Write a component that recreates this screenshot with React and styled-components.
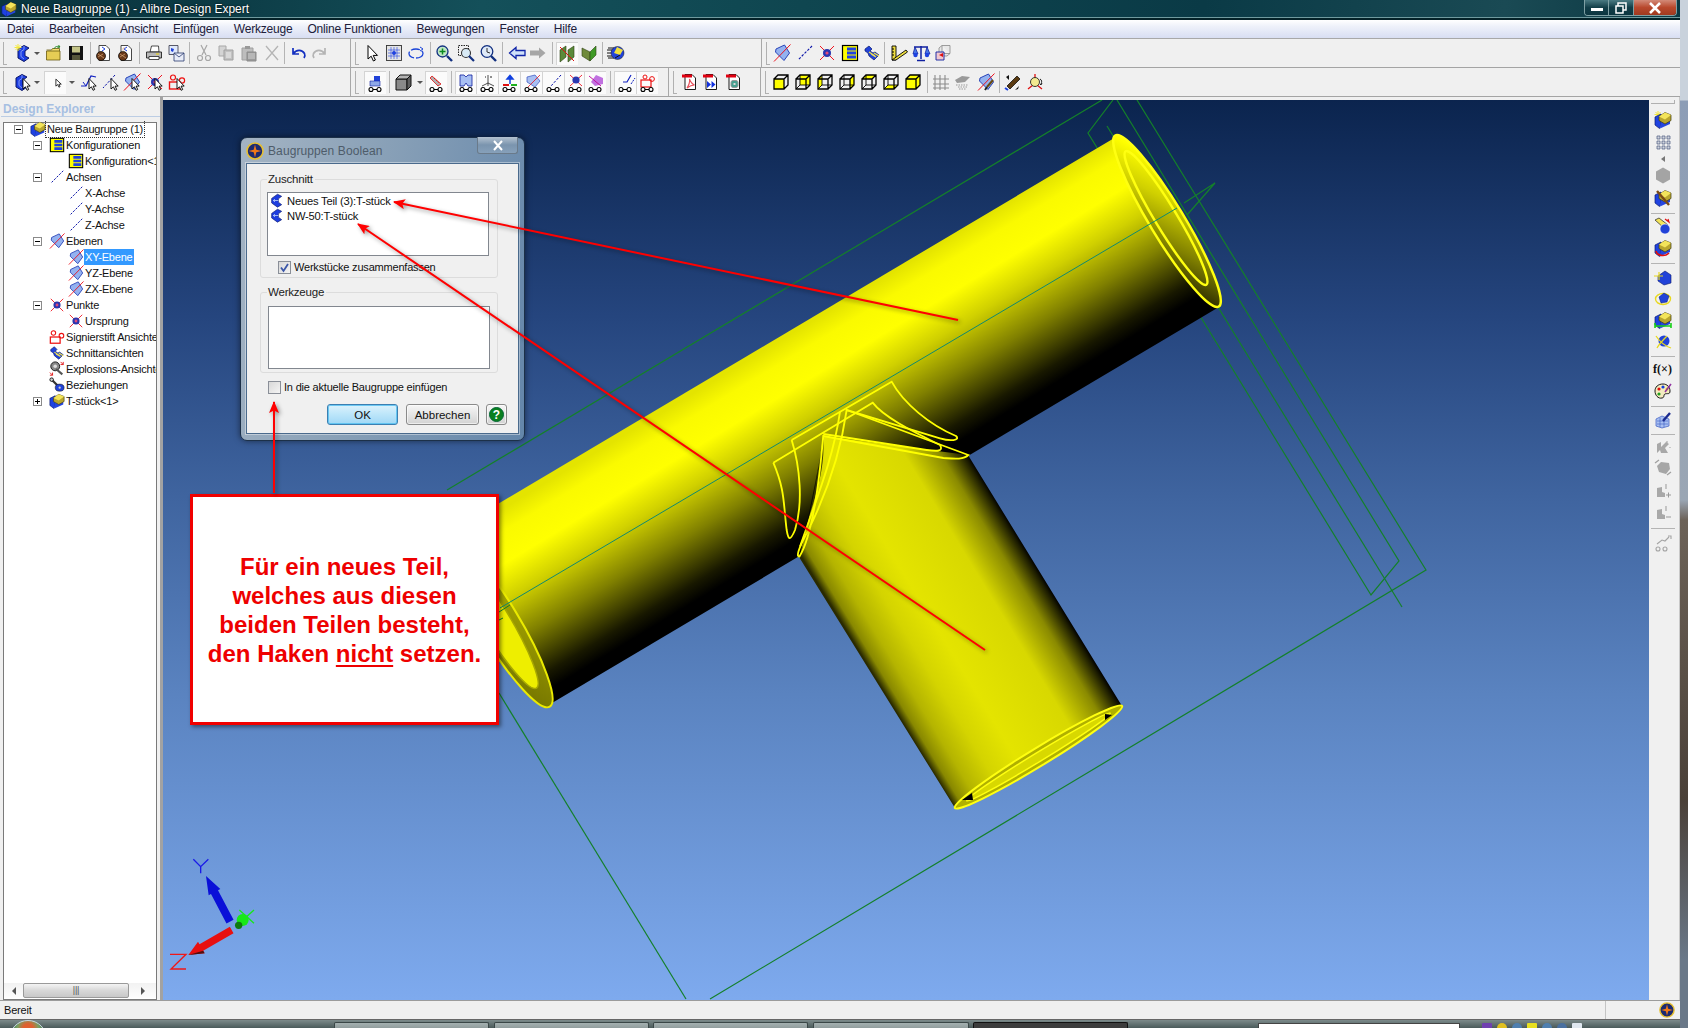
import React from 'react';
import styled, { createGlobalStyle } from 'styled-components';

const Global = createGlobalStyle`
  html, body { margin: 0; padding: 0; background: #fff; }
  #root { width: 1688px; height: 1028px; }
  * { box-sizing: border-box; }
`;

const SANS = `"Liberation Sans", Arial, sans-serif`;

/* ---------- icons ---------- */
const Ptr = () => <path d="M9 5.500v10.500l2.400-2.200 1.700 3.500 1.600-.8-1.600-3.400h3.100z" fill="#fff" stroke="#000" strokeWidth=".9" />;
const BlueC = ({ dx = 0 }) => (
  <g transform={`translate(${dx} 0)`}>
    <path d="M3 5 9 1.500 14 4l-4 3v5l4 2-5 3.500L3 14z" fill="#1c3ee4" stroke="#0a1668" strokeWidth="1" />
    <path d="M9 2v3.500L6 7.500v5l3 2.500" fill="none" stroke="#8ea4f5" strokeWidth=".9" />
  </g>
);
const Spark = () => <path d="M4 0v7M.5 3.500h7M1.500 1 6.500 6M6.500 1l-5 5" stroke="#f4e838" strokeWidth="1" />;
const PlaneS = () => (
  <>
    <path d="M3 5 11.500 1 16.500 9 11 16.500 2.500 8z" fill="#94b2f0" stroke="#2a44b8" strokeWidth="1" />
    <path d="M17.500 .5 1 17.500" stroke="#ee0f1a" strokeWidth="1" />
  </>
);
const AxisS = () => <path d="M16 2 2 16" stroke="#0a14a8" strokeWidth="1.100" strokeDasharray="2.500 1.500" />;
const PointS = () => (
  <>
    <path d="M2 2 16 16M16 2 2 16" stroke="#ee1522" strokeWidth="1" />
    <circle cx="9" cy="9" r="4" fill="#2a36b0" />
    <circle cx="9" cy="9" r="1.600" fill="#e04a7a" />
  </>
);
const TableS = () => (
  <>
    <rect x="1.500" y="1.500" width="15" height="15" fill="#ffff00" stroke="#000" strokeWidth="1.200" />
    <path d="M6 3.500h9v3H6zM6 7.500h9v3H6zM6 11.500h9v3H6z" fill="#1f42e0" />
  </>
);
const MarkerS = () => (
  <>
    <rect x="1.500" y="9" width="11" height="7" fill="none" stroke="#ee1010" strokeWidth="1.400" />
    <circle cx="5" cy="4.500" r="2.500" fill="none" stroke="#ee1010" strokeWidth="1.200" />
    <circle cx="14" cy="7.500" r="2.600" fill="none" stroke="#ee1010" strokeWidth="1.200" />
  </>
);
const SectionS = () => (
  <>
    <path d="M2 5 6 2l3 3-2 2 3 2 2-1 4 3-5 5-5-4-1-3-3-2z" fill="#2142d8" stroke="#0a1a70" strokeWidth=".7" />
    <path d="M8 10l5 3M6 8l6 4M11 9l5 3" stroke="#f5e54a" strokeWidth="1.300" />
  </>
);
const AssyS = () => (
  <>
    <path d="M1 6 7 3v11l-1.500 3.500L1 14z" fill="#1f42e0" stroke="#0a1a70" strokeWidth=".7" />
    <path d="M6 17.500 16 13V8L7 11z" fill="#2445e2" />
    <path d="M5 5.500 11 1.500l6 2.500v5.500l-6 3.500-6-3.500z" fill="#b9a62e" stroke="#3d3a10" strokeWidth=".7" />
    <path d="M5 5.500 11 8.500l6-4.500-6-2.500z" fill="#f3e45a" />
  </>
);
const Cart = ({ children }) => (
  <>
    {children}
    <circle cx="4" cy="15.500" r="2" fill="#fff" stroke="#000" strokeWidth="1.100" />
    <circle cx="12" cy="15.500" r="2" fill="#fff" stroke="#000" strokeWidth="1.100" />
    <path d="M6 15.500h4" stroke="#000" />
  </>
);
const Doc = ({ fill = '#fff', stroke = '#333' }) => <path d="M4 1.500h7l3.500 3.500v11.500H4z" fill={fill} stroke={stroke} strokeWidth=".9" />;
const Pdf = ({ children }) => (
  <>
    <Doc stroke="#000" />
    <rect x="1" y="1.500" width="10" height="3" fill="#e00010" />
    {children}
  </>
);
const Cube = ({ face }) => {
  const f = {
    front: 'M2 6h10v10H2z',
    back: 'M6 2h10v10H6z',
    left: 'M2 6 6 2v10l-4 4z',
    right: 'M12 6l4-4v10l-4 4z',
    top: 'M2 6 6 2h10l-4 4z',
    bottom: 'M2 16l4-4h10l-4 4z',
    solid: 'M2 6 6 2h10v10l-4 4H2z',
  }[face];
  return (
    <>
      <path d={f} fill="#ffff00" />
      <path d="M2 6h10v10H2zM2 6 6 2h10v10l-4 4M12 6l4-4" fill="none" stroke="#000" strokeWidth="1.300" />
      {face !== 'front' && face !== 'solid' && <path d="M6 2v10h10M6 12l-4 4" fill="none" stroke="#000" strokeWidth=".9" />}
    </>
  );
};
const Logo = () => (
  <>
    <circle cx="9" cy="9" r="8" fill="#1c2a70" stroke="#e8c030" strokeWidth="1.600" />
    <path d="M9 2.500 10.300 7.700 15.500 9 10.300 10.300 9 15.500 7.700 10.300 2.500 9 7.700 7.700z" fill="#f07818" />
  </>
);

const ICONS = {
  newPart: <><BlueC dx={1} /><Spark /></>,
  open: <><path d="M1.500 6h5l1-1.500h7V8" fill="#f6e070" stroke="#6a5a10" strokeWidth=".8" /><path d="M1.500 16V7h13.500v9z" fill="#e6cd55" stroke="#6a5a10" strokeWidth=".8" /><path d="M9 5c1-3 4-3 6-2l-1.500-2M15 3l-2.500.5" fill="none" stroke="#2b8a2b" /></>,
  save: <><path d="M2 2h14v14H2z" fill="#111" /><rect x="5" y="2.500" width="8" height="6" fill="#c4c488" /><rect x="5" y="11" width="8" height="5" fill="#56563a" /></>,
  docLockA: <><Doc /><path d="M7 3l3 2-3 2" fill="none" stroke="#1f42e0" /><circle cx="6" cy="12" r="4.500" fill="#6a3a1a" stroke="#000" strokeWidth=".7" /><path d="M3 10l6 4M3 13l5-3" stroke="#d9a878" strokeWidth=".7" /></>,
  docLockB: <><Doc /><path d="M10 3 7 5l3 2" fill="none" stroke="#1f42e0" /><circle cx="6" cy="12" r="4.500" fill="#6a3a1a" stroke="#000" strokeWidth=".7" /><path d="M3 10l6 4M3 13l5-3M6 7.500V4h2" stroke="#d9a878" strokeWidth=".7" fill="none" /></>,
  print: <><path d="M5 8 6.500 2h7L14 8z" fill="#fff" stroke="#222" strokeWidth=".8" /><path d="M1.500 8h15v6h-15z" fill="#b8b8b8" stroke="#222" strokeWidth=".9" /><path d="M4 12.500h10v3H4z" fill="#fff" stroke="#222" strokeWidth=".8" /><path d="M11 10h3" stroke="#e8d020" strokeWidth="1.200" /></>,
  preview: <><path d="M2 1.500h9v9H2z" fill="#dfe8fa" stroke="#334" strokeWidth=".8" /><path d="M4 4l3 1-1 3-2-1z" fill="#2142d8" /><path d="M7 9h10v8H7z" fill="#e9edf8" stroke="#2a3a70" strokeWidth=".8" /><path d="m7 9 5 4 5-4" fill="none" stroke="#2a3a70" strokeWidth=".8" /></>,
  cut: <g stroke="#a6a6a6" fill="none" strokeWidth="1.200"><path d="M6 1l5 10M12 1 7 11" /><circle cx="5" cy="14" r="2.500" /><circle cx="13" cy="14" r="2.500" /></g>,
  copy: <><path d="M2 2h7v10H2z" fill="#d4d4d4" stroke="#a8a8a8" /><path d="M7 6h9v10H7z" fill="#c2c2c2" stroke="#a0a0a0" /><path d="M9 9h5M9 11h5M9 13h5" stroke="#f0f0f0" /></>,
  paste: <><path d="M2 4h11v12H2z" fill="#bdbdbd" stroke="#a0a0a0" /><path d="M5 2h5v3H5z" fill="#999" /><path d="M7 8h9v9H7z" fill="#9a9a9a" stroke="#8a8a8a" /><path d="M8 10h7M8 12h7M8 14h7" stroke="#d4d4d4" /></>,
  del: <path d="M3 2l12 14M15 2 3 16" stroke="#b4b4b4" strokeWidth="1.300" />,
  undo: <path d="M4 4v6h6M4.500 9.500C7 5.500 13 5 15.500 9.500c.7 1.500.5 3-.5 4.500" fill="none" stroke="#1430c0" strokeWidth="1.700" />,
  redo: <path d="M14 4v6H8M13.500 9.500C11 5.500 5 5 2.500 9.500c-.7 1.500-.5 3 .5 4.500" fill="none" stroke="#b4b4b4" strokeWidth="1.700" />,
  pointer: <path d="M4 1.500v13.500l3.200-2.800 2.200 4.800 2-1-2.200-4.600h4.300z" fill="#fff" stroke="#000" strokeWidth="1" />,
  gridSel: <><rect x="1.500" y="1.500" width="15" height="15" fill="#e4e4e4" stroke="#333" strokeWidth=".9" /><path d="M9 3v12M3 9h12M6 3v12M12 3v12M3 6h12M3 12h12" stroke="#1f42e0" strokeWidth=".6" /><circle cx="9" cy="9" r="2" fill="#1f42e0" /></>,
  lasso: <><ellipse cx="9" cy="9.500" rx="7" ry="4.500" fill="none" stroke="#1a44d8" strokeWidth="1.300" strokeDasharray="9 2" /><path d="M13 3l3 2-3 2" fill="none" stroke="#1a44d8" /></>,
  zoomPlus: <><circle cx="7.500" cy="7.500" r="5.500" fill="#bfe6c6" stroke="#123080" strokeWidth="1.300" /><path d="M12 12l5 5" stroke="#123080" strokeWidth="2.400" /><path d="M7.500 4.500v6M4.500 7.500h6" stroke="#0a8a20" strokeWidth="1.500" /></>,
  zoomWin: <><path d="M1.500 1.500h10v10h-10z" fill="none" stroke="#222" strokeDasharray="1.500 1" /><circle cx="9" cy="9" r="4.500" fill="#d8eaf5" stroke="#333" strokeWidth="1.100" /><path d="M12 12l5 5" stroke="#123080" strokeWidth="2.200" /></>,
  zoomHist: <><circle cx="8" cy="7.500" r="5.800" fill="#dfeaf8" stroke="#123080" strokeWidth="1.300" /><path d="M12 12l5 5" stroke="#123080" strokeWidth="2.400" /><path d="M8 4v4l3 1" fill="none" stroke="#333" /></>,
  back: <path d="M1.500 9 8 3.500v3h9v5H8v3z" fill="#cfe0fa" stroke="#1024a8" strokeWidth="1.300" />,
  forward: <path d="M16.500 9 10 3.500v3H1v5h9v3z" fill="#a6a6a6" />,
  greenPlanes: <><path d="M2 5 8 1v11l-6 5z" fill="#5a8a3a" stroke="#2b4010" strokeWidth=".6" /><path d="M10 5l6-4v11l-6 5z" fill="#5a8a3a" stroke="#2b4010" strokeWidth=".6" /><path d="M2 2 16 16" stroke="#e01010" strokeWidth="1" /></>,
  greenPlane: <><path d="M2 4l8 4v9L2 12z" fill="#6f8a3a" stroke="#2b4010" strokeWidth=".6" /><path d="M10 8l6-6v9l-6 6z" fill="#3f9a26" stroke="#2b4010" strokeWidth=".6" /></>,
  speedBall: <><path d="M0 6h6M0 9h6M0 12h6M1 4h6M1 14h6" stroke="#111" /><circle cx="10.500" cy="9" r="6.500" fill="#2142d8" stroke="#111" strokeWidth=".5" /><path d="M10 3l6 3-3 5-6-2z" fill="#f0e040" /><path d="M8 14l5-3" stroke="#111" /></>,
  plane: <PlaneS />,
  axis: <AxisS />,
  point: <PointS />,
  table: <TableS />,
  section: <SectionS />,
  ruler: <><path d="M2 2h4v14H2z" fill="#f0e040" stroke="#000" strokeWidth=".9" /><path d="M2 16 16 6l1.500 2L6 16z" fill="#f0e040" stroke="#000" strokeWidth=".9" /><path d="M2 5h2M2 8h2M2 11h2" stroke="#000" /></>,
  balance: <><path d="M9 2v13M5 16.500h8M2 3h14" stroke="#1020a0" strokeWidth="1.500" /><path d="M3 3 1 10h5zM15 3l-2 7h5z" fill="#4a7ae8" stroke="#1020a0" strokeWidth=".8" /><circle cx="3.500" cy="11" r="2.200" fill="#1f42e0" /><circle cx="15" cy="11" r="2.200" fill="#1f42e0" /></>,
  ghostCubes: <><path d="M8 1.500h8v8H8zM8 1.500 5 4v8h8l3-2.500" fill="#e8e8e8" stroke="#888" strokeWidth=".8" /><path d="M2 8h8v8H2z" fill="#f0c8d0" stroke="#1020a0" strokeWidth=".9" /><path d="M5 11l4-2v4z" fill="#e01010" /></>,
  newPartP: <><BlueC dx={-1} /><Ptr /></>,
  sketchP: <><path d="M1 13h5L11 3l5 1" fill="none" stroke="#1020c0" strokeWidth="1.200" /><path d="M3 9l3 4" stroke="#1020c0" /><Ptr /></>,
  axisP: <><path d="M13 2 1 15" stroke="#0a14a8" strokeDasharray="2.500 1.500" /><Ptr /></>,
  planeP: <><PlaneS /><Ptr /></>,
  pointP: <><PointS /><Ptr /></>,
  markerP: <><MarkerS /><Ptr /></>,
  cartAssy: <Cart><path d="M7 2h6v5H7z" fill="#2142d8" /><path d="M3 7h10v5H3z" fill="#8ea8e8" stroke="#1020a0" strokeWidth=".6" /></Cart>,
  cube: <><path d="M2 6h11v11H2z" fill="#8a8a8a" stroke="#111" strokeWidth="1" /><path d="M2 6l4-4h11l-4 4z" fill="#b4b4b4" stroke="#111" strokeWidth="1" /><path d="M13 6l4-4v11l-4 4z" fill="#5e5e5e" stroke="#111" strokeWidth="1" /></>,
  cartRed: <Cart><path d="M4 2 13 10l-3 2-8-8z" fill="#b0b0b0" stroke="#e01010" strokeWidth=".8" /><path d="M6 4l5 5" stroke="#e01010" strokeDasharray="1.500 1" /></Cart>,
  cartPlaneBlue: <Cart><path d="M2 1h4l2 2 2-2h4v11H10L8 9l-2 3H2z" fill="#a8bff2" stroke="#1020a0" strokeWidth=".8" /></Cart>,
  cartAxes: <Cart><path d="M9 12V1M3 12l6-3 6 3" fill="none" stroke="#222" strokeWidth=".8" /><path d="M6 3h1M11 3h2" stroke="#222" /></Cart>,
  cartArrows: <Cart><path d="M9 10V2M6 5l3-3.500L12 5z" fill="#1040e0" stroke="#1040e0" strokeWidth="1.500" /><path d="M2 11h6" stroke="#e01010" strokeWidth="2" /><path d="M10 11h6" stroke="#20b020" strokeWidth="2" /></Cart>,
  cartPlaneRed: <Cart><path d="M4 3 12 1l5 6-5 6-8-5z" fill="#a8bff2" stroke="#3550c0" strokeWidth=".7" /><path d="M17 1 5 13" stroke="#e8101c" strokeWidth=".8" /></Cart>,
  cartAxis: <Cart><path d="M16 1 6 12" stroke="#0a14a8" strokeDasharray="2.500 1.500" /></Cart>,
  cartPoint: <Cart><path d="M3 1 15 12M15 1 3 12" stroke="#ee1522" strokeWidth=".9" /><circle cx="9" cy="6" r="3.600" fill="#2a36b0" /></Cart>,
  cartPurple: <Cart><path d="M9 1l7 3v6l-8 2-4-4z" fill="#c070e0" /><path d="M2 2l12 10" stroke="#c010a0" /></Cart>,
  cartSketch: <Cart><path d="M6 8h4l4-7" fill="none" stroke="#1020c0" strokeWidth="1.200" /><path d="M14 10 18 4" stroke="#1020c0" strokeDasharray="2 1" /></Cart>,
  cartMarker: <Cart><rect x="2" y="6" width="10" height="7" fill="none" stroke="#ee1010" strokeWidth="1.200" /><circle cx="6" cy="3" r="2" fill="none" stroke="#ee1010" /><circle cx="13" cy="5" r="2.400" fill="none" stroke="#ee1010" /></Cart>,
  pdfA: <Pdf><path d="M6 15c2-3 3-6 2.500-9 1 3 2.500 5 5 6-3 0-5 1-7.500 3z" fill="none" stroke="#e8505a" strokeWidth="1.100" /></Pdf>,
  pdfB: <Pdf><path d="M5 8l4 3.500L5 15zM9.500 8l4 3.500-4 3.500z" fill="#1030e0" /></Pdf>,
  pdfC: <Pdf><rect x="6" y="7.500" width="7" height="7" rx="2" fill="#48a090" stroke="#999" /><rect x="8.500" y="10" width="2" height="2" fill="#d8d8d8" /></Pdf>,
  cFront: <Cube face="front" />, cBack: <Cube face="back" />, cLeft: <Cube face="left" />, cRight: <Cube face="right" />, cTop: <Cube face="top" />, cBottom: <Cube face="bottom" />, cSolid: <Cube face="solid" />,
  grayGrid: <path d="M3 2v15M8 2v15M13 2v15M1 6h16M1 11h16M1 15h16" stroke="#8c8c8c" strokeWidth="1.100" fill="none" />,
  grayScatter: <><path d="M2 7l7-4 8 1-5 5-8 1z" fill="#9a9a9a" /><path d="M3 12h12M5 14h9M6 16h7" stroke="#9a9a9a" strokeDasharray="1.500 1" /></>,
  planeBrush: <><PlaneS /><path d="M16 7 10 14" stroke="#6a4a10" strokeWidth="2" /><path d="M10 14l-2 3" stroke="#222" strokeWidth="2" /></>,
  spy: <><path d="M4 13 14 3l3 3-10 10z" fill="#5a3a10" stroke="#000" strokeWidth=".7" /><path d="M3 4l3-2v5zM15 16l-3 1 4-4z" fill="#111" /><path d="M2 15l3 2" stroke="#1f42e0" strokeWidth="2" /></>,
  target: <><path d="M9 1v4M2 16l5-4M16 16l-5-4" stroke="#e01010" strokeWidth="1.300" /><circle cx="9" cy="9" r="4.500" fill="#f3ea90" stroke="#222" strokeWidth=".9" /><path d="M14 6c2 1 2 3 1 5M14 11l1 1 1-2" fill="none" stroke="#222" /></>,
  dots: <path d="M3 3h3v3H3zM8 3h3v3H8zM13 3h3v3h-3zM3 8h3v3H3zM8 8h3v3H8zM13 8h3v3h-3zM3 13h3v3H3zM8 13h3v3H8zM13 13h3v3h-3z" fill="#cfd4de" stroke="#4a5a80" strokeWidth=".7" />,
  tiny: <path d="M11 6v6L7 9z" fill="#777" />,
  hex: <path d="M9 1.500l7 4v8l-7 4-7-4v-8z" fill="#a4a4a4" />,
  pickBlue: <><AssyS /><path d="M3 2l12 14" stroke="#7a4a14" strokeWidth="2.400" /></>,
  keyBall: <><path d="M1 3l4-2 9 7-4 3z" fill="#f3e45a" stroke="#222" strokeWidth=".7" /><circle cx="11" cy="12" r="5" fill="#2142d8" stroke="#fff" strokeWidth=".6" /><path d="M11 2l4 3-1-3" fill="none" stroke="#e01010" strokeWidth="1.200" /></>,
  redArc: <><AssyS /><path d="M2 12c1 5 9 6 13 2" fill="none" stroke="#e01010" strokeWidth="1.600" /></>,
  blueSpark: <><path d="M4 8 11 3l6 4v8l-7 2-6-4z" fill="#2142d8" stroke="#0a1a70" strokeWidth=".6" /><path d="M0 8h9M5 4v8" stroke="#e8d820" strokeWidth="1.200" /></>,
  blueRing: <><ellipse cx="9" cy="9" rx="7.500" ry="5.500" fill="none" stroke="#e8d820" strokeWidth="1.400" /><path d="M5 7l5-4 5 3-2 6-6 1z" fill="#2142d8" stroke="#0a1a70" strokeWidth=".5" /></>,
  greenLink: <><AssyS /><path d="M1 15h16M1 12v5M17 12v5" stroke="#18d018" strokeWidth="1.600" /></>,
  ringBall: <><circle cx="10" cy="8" r="5.500" fill="#2142d8" /><path d="M2 3c4 6 9 10 15 12M13 3C9 7 5 11 3 15" fill="none" stroke="#e8d820" strokeWidth="1.300" /></>,
  palette: <><path d="M9 2c-5 0-8 3-8 7s3 8 7 7c3-.5 1-3 3-4s5 1 5-3c0-4-3-7-7-7z" fill="#f4ecc0" stroke="#000" strokeWidth=".9" /><circle cx="5" cy="7" r="1.600" fill="#e01010" /><circle cx="9" cy="5" r="1.600" fill="#1040e0" /><circle cx="5" cy="12" r="1.600" fill="#20a020" /><circle cx="13" cy="7" r="1.500" fill="#e8d020" /><path d="M11 10 17 2" stroke="#9030a0" strokeWidth="1.500" /></>,
  brushCube: <><path d="M2 8l6-3 7 3v7l-7 2-6-2z" fill="#a8bff2" stroke="#3a5ac0" strokeWidth=".7" /><path d="M3 10h11M3 13h11M6 7v9M10 7v9" stroke="#3a5ac0" strokeWidth=".6" /><path d="M9 10 16 2" stroke="#1a2a90" strokeWidth="2.400" /></>,
  gMinus: <><path d="M3 14V5l4-2v5l5-5 3 2-4 4 3 5H7l-1-3z" fill="#a8a8a8" /><path d="M13 2v2M16 8v1" stroke="#a0a0a0" /></>,
  gSpin: <><path d="M3 7l4-4 8 1 1 6-4 5-7-2z" fill="#a6a6a6" /><path d="M1 4 5 1M13 16l4-3" stroke="#a0a0a0" strokeWidth="1.300" /></>,
  gPlus: <><path d="M3 15V6l5-1v5l3 1v4z" fill="#a8a8a8" /><path d="M12 13h5M14.500 10.500v5M12 2v5" stroke="#999" /></>,
  gDash: <><path d="M3 15V6l5-1v5l3 1v4z" fill="#a8a8a8" /><path d="M12 13h5M12 2v5" stroke="#999" /></>,
  gCart: <g fill="none" stroke="#a4a4a4" strokeWidth="1.100"><circle cx="4" cy="15" r="2" /><circle cx="11" cy="15" r="2" /><path d="M3 10l5-4 3 1 4-4M14 2h3v3" /></g>,
  /* tree */
  assy: <AssyS />,
  explode: <><circle cx="7" cy="6" r="5" fill="#888" stroke="#111" strokeWidth="1" /><circle cx="7" cy="6" r="2" fill="#ddd" /><path d="M8 9l7 6" stroke="#555" strokeWidth="2.400" /><path d="M13 1l3 3M16 1v3h-3M1 13l3 3M1 16h3v-3" fill="none" stroke="#e01010" /></>,
  relate: <><path d="M2 2l9 9" stroke="#333" strokeWidth="2.400" /><circle cx="3" cy="3" r="2" fill="#ccc" stroke="#111" /><ellipse cx="12" cy="12" rx="5" ry="4" fill="#2142d8" stroke="#111" strokeWidth=".6" /><circle cx="12" cy="12" r="1.300" fill="#ccc" /></>,
  marker: <MarkerS />,
  partBlue: <><path d="M2 6.500 9 1.500l5 2.500-4 3v4l4 3-5 3-7-5z" fill="#1e3ee0" stroke="#0a1a70" strokeWidth=".8" /><path d="M4 9h6M4 9l2-1.500M4 9l2 1.500" stroke="#bcd0fa" /></>,
  logo: <Logo />,
  newPartAssy: <><Spark /><AssyS /></>,
};

const IconSvg = styled.svg`
  display: block;
  flex: none;
  overflow: visible;
`;
const Icon = ({ name, size = 18 }) => (
  <IconSvg viewBox="0 0 18 18" width={size} height={size}>{ICONS[name]}</IconSvg>
);

/* ---------- frame ---------- */
const Screen = styled.div`
  position: relative;
  width: 1688px;
  height: 1028px;
  overflow: hidden;
  display: flex;
  font-family: ${SANS};
  font-size: 11px;
  letter-spacing: -0.2px;
  color: #111;
`;
const AppWindow = styled.div`
  width: 1680px;
  height: 1020px;
  display: flex;
  flex-direction: column;
  background: #f0f0f0;
`;
const Column = styled.div`
  width: 1680px;
  display: flex;
  flex-direction: column;
  height: 1028px;
`;
const DesktopStrip = styled.div`
  width: 8px;
  background: linear-gradient(180deg, #c9d2dc 0, #c9d2dc 100px, #8c9db6 101px, #9aa6b4 500px, #6c6258 520px, #4a4038 800px, #6a7888 960px, #6a7888 100%);
`;
const TitleBar = styled.div`
  height: 20px;
  flex: none;
  display: flex;
  align-items: center;
  padding-left: 1px;
  gap: 4px;
  color: #fff;
  font-size: 12px;
  letter-spacing: 0;
  background: linear-gradient(95deg, #0a3640 0, #0c3a44 200px, #14505a 480px, #0f4650 800px, #0a3a46 1200px, #1a4a54 1500px, #0b3842 100%);
  border-bottom: 2px solid #042228;
  box-shadow: inset 0 -1px 0 #6f9a9e;
  position: relative;
  text-shadow: 0 0 2px #000;
`;
const WinButtons = styled.div`
  position: absolute;
  top: 0;
  right: 3px;
  display: flex;
  height: 16px;
  border: 1px solid #7fa0a4;
  border-top: none;
  border-radius: 0 0 4px 4px;
  overflow: hidden;
`;
const WinBtn = styled.div`
  width: ${p => p.$w}px;
  display: flex;
  align-items: center;
  justify-content: center;
  background: ${p => p.$close ? 'linear-gradient(180deg,#d28a78,#b8482c 50%,#a03a20)' : 'linear-gradient(180deg,#4a7a82,#123e48 50%,#0c3640)'};
  border-right: ${p => p.$close ? 'none' : '1px solid #7fa0a4'};
`;
const MenuBar = styled.div`
  height: 19px;
  flex: none;
  display: flex;
  align-items: center;
  gap: 15px;
  padding-left: 7px;
  font-size: 12px;
  background: linear-gradient(180deg, #ffffff 0, #eef1fa 35%, #d8def2 100%);
  border-bottom: 1px solid #a8a8a8;
  color: #20203a;
`;
const ToolRow = styled.div`
  height: 29px;
  flex: none;
  display: flex;
  align-items: stretch;
  margin-left: -9px;
  background: #f0f0f0;
  border-bottom: 1px solid #a4a4a4;
`;
const ToolSlot = styled.div`
  width: ${p => p.$w}px;
  flex: none;
  display: flex;
  align-items: center;
`;
const ToolCell = styled.div`
  width: 18px;
  flex: none;
  align-self: stretch;
  display: flex;
  align-items: center;
  justify-content: center;
`;
const Sep = styled.div`
  width: 1px;
  height: 22px;
  flex: none;
  background: #b4b4b4;
`;
const ToolEnd = styled.div`
  width: 1px;
  flex: none;
  align-self: stretch;
  background: #a8a8a8;
`;
const Grip = styled.div`
  width: 4px;
  height: 23px;
  flex: none;
  border-left: 1px solid #b0b0b0;
  border-bottom: 1px solid #b0b0b0;
`;
const DropArrow = styled.div`
  width: 0;
  height: 0;
  flex: none;
  border-left: 3px solid transparent;
  border-right: 3px solid transparent;
  border-top: 3px solid #555;
`;
const Pressed = styled.div`
  flex: none;
  width: ${p => p.$w || 22}px;
  height: 23px;
  display: flex;
  align-items: center;
  justify-content: ${p => p.$end ? 'flex-end' : 'center'};
  background: #fbfbfb;
  border-left: 1px solid #d4d4d4;
  border-top: 1px solid #d4d4d4;
`;

const Toolbar = ({ items }) => (
  <ToolRow>
    <ToolSlot $w={items[0][1]} />
    {items.map(([name, x], i) => {
      const w = (items[i + 1] ? items[i + 1][1] : x + 18) - x;
      let inner;
      if (name === 'sep') inner = <Sep />;
      else if (name === 'end') inner = <ToolEnd />;
      else if (name === 'grip') inner = <Grip />;
      else if (name === 'dd') inner = <DropArrow />;
      else if (name === 'blank') inner = <Pressed $w={22} $end><IconSvg viewBox="0 0 18 18" width="14" height="14"><path d="M5 4v9l2.400-2 1.500 3.400 1.500-.7-1.500-3.200h3z" fill="#fff" stroke="#000" /></IconSvg></Pressed>;
      else if (name.endsWith('*')) inner = <Pressed><Icon name={name.slice(0, -1)} /></Pressed>;
      else inner = <Icon name={name} />;
      return <ToolSlot key={i} $w={w}><ToolCell>{inner}</ToolCell></ToolSlot>;
    })}
  </ToolRow>
);

const ROW1 = [
  ['grip', 5], ['newPart', 23], ['dd', 37], ['open', 53.6], ['save', 76.5], ['sep', 91], ['docLockA', 104], ['docLockB', 126], ['sep', 140], ['print', 154], ['preview', 176], ['sep', 190], ['cut', 204], ['copy', 226], ['paste', 249], ['del', 272], ['sep', 285], ['undo', 298.5], ['redo', 320], ['end', 351],
  ['grip', 357], ['pointer', 373], ['gridSel', 394], ['lasso', 416], ['sep', 430.5], ['zoomPlus', 444], ['zoomWin', 466], ['zoomHist', 488], ['sep', 502.5], ['back', 517], ['forward', 538], ['sep', 553], ['greenPlanes*', 567], ['greenPlane', 589], ['sep', 603], ['speedBall', 616], ['end', 762],
  ['grip', 768], ['plane', 782], ['axis', 805], ['point', 827], ['table', 850], ['section', 872], ['sep', 885], ['ruler', 899], ['balance', 921], ['ghostCubes', 943],
];
const ROW2 = [
  ['grip', 5], ['newPartP', 23], ['dd', 37], ['blank', 54.5], ['dd', 71.5], ['sketchP', 89], ['axisP', 111], ['planeP', 132], ['pointP', 155], ['markerP', 177], ['end', 350],
  ['grip', 357], ['cartAssy*', 375], ['sep', 389], ['cube', 403], ['dd', 420], ['cartRed*', 436], ['sep', 451.5], ['cartPlaneBlue*', 466], ['cartAxes*', 487], ['cartArrows*', 509], ['cartPlaneRed*', 531], ['cartAxis*', 553], ['cartPoint*', 575], ['cartPurple*', 595], ['sep', 610], ['cartSketch*', 625], ['cartMarker*', 647], ['end', 668],
  ['grip', 675], ['pdfA', 690], ['pdfB', 711], ['pdfC', 734], ['end', 760],
  ['grip', 767], ['cFront', 781], ['cBack', 803], ['cLeft', 825], ['cRight', 847], ['cTop', 869], ['cBottom', 891], ['cSolid', 913], ['sep', 927], ['grayGrid', 941], ['grayScatter', 962], ['planeBrush', 986], ['sep', 999], ['spy', 1012], ['target', 1035],
];

/* ---------- main ---------- */
const Main = styled.div`
  flex: 1;
  min-height: 0;
  display: flex;
  align-items: stretch;
  background: #f0f0f0;
`;
const LeftPanel = styled.div`
  width: 163px;
  flex: none;
  display: flex;
  flex-direction: column;
  padding-left: 3px;
  border-right: 3px solid #a2a2a2;
`;
const PanelHeader = styled.div`
  height: 20px;
  flex: none;
  margin-left: -2px;
  display: flex;
  align-items: center;
  font-size: 12px;
  font-weight: bold;
  letter-spacing: 0;
  color: #a6bfe2;
  border-bottom: 1px solid #bccde4;
  padding-left: 2px;
  padding-top: 4px;
`;
const TreeBox = styled.div`
  margin-top: 5px;
  width: 154px;
  flex: 1;
  min-height: 0;
  display: flex;
  flex-direction: column;
  background: #fff;
  border: 1px solid #7a7a7a;
`;
const TreeList = styled.div`
  flex: 1;
  min-height: 0;
  overflow: hidden;
  margin-top: -2px;
`;
const TreeRow = styled.div`
  height: 16px;
  display: flex;
  align-items: center;
  white-space: nowrap;
  padding-left: ${p => 9.5 + 19 * p.$level}px;
`;
const Expander = styled.div`
  width: 9px;
  height: 9px;
  flex: none;
  margin-right: 7.500px;
  border: 1px solid #8a8a8a;
  background: #fff;
  position: relative;
  visibility: ${p => p.$hidden ? 'hidden' : 'visible'};
  &::before {
    content: '';
    position: absolute;
    left: 1px;
    top: 3px;
    width: 5px;
    height: 1px;
    background: #000;
  }
  &::after {
    content: '';
    display: ${p => p.$plus ? 'block' : 'none'};
    position: absolute;
    left: 3px;
    top: 1px;
    width: 1px;
    height: 5px;
    background: #000;
  }
`;
const TreeLabel = styled.span`
  padding: 1px 1px;
  line-height: 14px;
  color: ${p => p.$selected ? '#fff' : '#111'};
  background: ${p => p.$selected ? '#3399ff' : 'transparent'};
  outline: ${p => p.$focus ? '1px dotted #333' : 'none'};
`;
const HScroll = styled.div`
  height: 15px;
  flex: none;
  display: flex;
  align-items: center;
  background: linear-gradient(180deg, #f2f2f2, #fdfdfd);
  margin-bottom: 1px;
`;
const ScrollArrow = styled.div`
  width: ${p => p.$left ? '19px' : 'auto'};
  flex: ${p => p.$left ? 'none' : '1'};
  display: flex;
  justify-content: center;
  &::before {
    content: '';
    border-top: 4px solid transparent;
    border-bottom: 4px solid transparent;
    border-right: ${p => p.$left ? '4px solid #555' : 'none'};
    border-left: ${p => p.$left ? 'none' : '4px solid #555'};
  }
`;
const ScrollThumb = styled.div`
  width: 106px;
  height: 15px;
  flex: none;
  border: 1px solid #9a9a9a;
  border-radius: 2px;
  background: linear-gradient(180deg, #f4f4f4, #d8d8d8 50%, #c8c8c8);
  display: flex;
  align-items: center;
  justify-content: center;
  font-size: 9px;
  color: #555;
  line-height: 1;
`;
const Viewport = styled.div`
  flex: 1;
  min-width: 0;
  margin-top: 3px;
  background: linear-gradient(180deg, #0b244e 0, #25457e 24%, #3f649f 44%, #5a83c0 66%, #7eaaee 100%);
`;
const ModelSvg = styled.svg`
  display: block;
  width: 1486px;
  height: 900px;
`;
const RightBar = styled.div`
  width: 31px;
  flex: none;
  display: flex;
  flex-direction: column;
  align-items: center;
  background: #f0f0f0;
  border-right: 1px solid #c8c8c8;
  padding: 3px 3px 0 0;
`;
const VGrip = styled.div`
  width: 24px;
  height: 4px;
  flex: none;
  border-bottom: 1px solid #b0b0b0;
  border-right: 1px solid #b0b0b0;
  margin-bottom: 2px;
`;
const VSlot = styled.div`
  height: ${p => p.$h}px;
  width: 100%;
  flex: none;
  display: flex;
  justify-content: center;
  font-family: "Liberation Serif", serif;
  font-weight: bold;
  font-size: 12px;
  letter-spacing: 0;
`;
const VCell = styled.div`
  height: 18px;
  flex: none;
  display: flex;
  align-items: center;
  justify-content: center;
`;
const VSep = styled.div`
  width: 24px;
  height: 1px;
  background: #b4b4b4;
`;
const StatusBar = styled.div`
  height: 20px;
  flex: none;
  display: flex;
  align-items: center;
  justify-content: space-between;
  border-top: 1px solid #9c9c9c;
  border-bottom: 1px solid #666;
  padding-left: 4px;
  background: #f0f0f0;
`;
const StatusCell = styled.div`
  width: 75px;
  height: 100%;
  display: flex;
  align-items: center;
  justify-content: flex-end;
  padding-right: 5px;
  border-left: 1px solid #c4c4c4;
`;
const TaskBar = styled.div`
  flex: 1;
  min-height: 0;
  display: flex;
  overflow: hidden;
  background: linear-gradient(180deg, #7c8a8a, #4a5a5a);
`;
const StartOrb = styled.div`
  width: 38px;
  height: 38px;
  flex: none;
  margin: 0 0 0 9px;
  border-radius: 50%;
  border: 1px solid #c8d8e0;
  background: radial-gradient(circle at 50% 22%, #e06030 0 15%, #78a060 32%, #2a5a6a 60%);
`;
const TaskBtn = styled.div`
  width: ${p => p.$w}px;
  margin-left: ${p => p.$ml}px;
  flex: none;
  height: 8px;
  margin-top: 2px;
  border: 1px solid ${p => p.$dark ? '#111' : '#3a4646'};
  border-bottom: none;
  border-radius: 2px 2px 0 0;
  background: ${p => p.$dark ? '#3c3c3c' : 'linear-gradient(180deg,#a4b0b0,#8a9696)'};
`;
const SearchBox = styled.div`
  width: 202px;
  margin-left: 130px;
  height: 8px;
  margin-top: 3px;
  flex: none;
  background: #fff;
  border: 1px solid #444;
  border-bottom: none;
`;
const Tray = styled.div`
  margin-left: 22px;
  flex: none;
  display: flex;
  gap: 5px;
  padding-top: 3px;
`;
const TrayDot = styled.div`
  width: 10px;
  height: 10px;
  border-radius: ${p => p.$round ? '50%' : '1px'};
  background: ${p => p.$c};
`;

/* ---------- overlays ---------- */
const Dialog = styled.div`
  position: absolute;
  left: 240px;
  top: 137px;
  width: 285px;
  height: 304px;
  padding: 0 5px 6px 5px;
  display: flex;
  flex-direction: column;
  border: 1px solid #1c3048;
  border-radius: 7px;
  background: linear-gradient(100deg, #a4b4c4 0, #8ba2b8 40%, #6486aa 100%);
  box-shadow: 0 0 6px rgba(0, 0, 0, .5);
`;
const DialogTitle = styled.div`
  height: 25px;
  flex: none;
  display: flex;
  align-items: center;
  gap: 4px;
  font-size: 12px;
  letter-spacing: .1px;
  color: #4e5c6a;
`;
const DialogClose = styled.div`
  position: absolute;
  top: -1px;
  right: 6px;
  width: 41px;
  height: 17px;
  display: flex;
  align-items: center;
  justify-content: center;
  border: 1px solid #6a7a8a;
  border-top: none;
  border-radius: 0 0 3px 3px;
  background: linear-gradient(180deg, #b4c2d0, #7a94ae 50%, #86a0ba);
`;
const DialogClient = styled.div`
  flex: 1;
  display: flex;
  flex-direction: column;
  padding: 8px 0 0 13px;
  background: #f0f0f0;
  border: 1px solid #4a6a8c;
  box-shadow: 0 0 0 1px rgba(255, 255, 255, .4);
`;
const Group = styled.fieldset`
  width: 238px;
  min-width: 0;
  margin: ${p => p.$mt}px 0 0 0;
  padding: ${p => p.$pt}px 8px ${p => p.$pb}px 6px;
  border: 1px solid #dcdcdc;
  border-radius: 3px;
  & > legend {
    font-size: 11.500px;
    line-height: 14px;
    margin-left: 0;
    padding: 0 2px 0 1px;
    color: #222;
  }
`;
const ListBox = styled.div`
  width: 222px;
  height: ${p => p.$h}px;
  margin-left: ${p => p.$ml || 0}px;
  padding: 0 2px;
  background: #fff;
  border: 1px solid #82878f;
`;
const ListItem = styled.div`
  height: 15px;
  display: flex;
  align-items: center;
  gap: 2px;
  white-space: nowrap;
  font-size: 11.200px;
  letter-spacing: -.2px;
`;
const CheckRow = styled.label`
  display: flex;
  align-items: center;
  gap: 3px;
  margin: ${p => p.$mt}px 0 0 ${p => p.$ml}px;
  white-space: nowrap;
  height: 14px;
`;
const CheckBox = styled.span`
  width: 13px;
  height: 13px;
  flex: none;
  display: flex;
  align-items: center;
  justify-content: center;
  border: 1px solid #8a8f98;
  background: linear-gradient(135deg, #d8d8d8, #f4f4f4);
`;
const ButtonRow = styled.div`
  display: flex;
  justify-content: flex-end;
  gap: 8px;
  margin-top: 10px;
  padding-right: 11px;
`;
const DlgButton = styled.div`
  width: ${p => p.$w}px;
  height: 21px;
  display: flex;
  align-items: center;
  justify-content: center;
  font-size: 11.500px;
  letter-spacing: 0;
  border-radius: 3px;
  border: 1px solid ${p => p.$primary ? '#3c7fb1' : '#8a8a8a'};
  background: ${p => p.$primary ? 'linear-gradient(180deg,#dcf2fc,#bde6fa 48%,#a0d8f6)' : 'linear-gradient(180deg,#f6f6f6,#e6e6e6 48%,#d2d2d2)'};
  box-shadow: inset 0 0 0 1px ${p => p.$primary ? 'rgba(80, 190, 240, .8)' : 'rgba(255, 255, 255, .6)'};
`;
const HelpButton = styled(DlgButton)`
  margin-left: -1px;
`;
const HelpDot = styled.span`
  width: 15px;
  height: 15px;
  border-radius: 50%;
  display: flex;
  align-items: center;
  justify-content: center;
  background: #0a8020;
  border: 1px solid #063;
  color: #fff;
  font-weight: bold;
  font-size: 12px;
`;
const Callout = styled.div`
  position: absolute;
  left: 190px;
  top: 494px;
  width: 309px;
  height: 231px;
  display: flex;
  align-items: center;
  justify-content: center;
  text-align: center;
  background: #fff;
  border: 3px solid #f00000;
  box-shadow: 2px 2px 4px rgba(0, 0, 0, .45);
  color: #ee0000;
  font-size: 24px;
  font-weight: bold;
  letter-spacing: 0;
  line-height: 29px;
  & u { text-underline-offset: 3px; }
`;
const ArrowLayer = styled.svg`
  position: absolute;
  left: 0;
  top: 0;
  width: 1688px;
  height: 1028px;
  pointer-events: none;
  filter: drop-shadow(2px 2px 2px rgba(0, 0, 0, .4));
`;

/* ---------- data ---------- */
const TREE = [
  { l: 0, i: 'assy', t: 'Neue Baugruppe (1)', e: 'm', focus: true },
  { l: 1, i: 'table', t: 'Konfigurationen', e: 'm' },
  { l: 2, i: 'table', t: 'Konfiguration<1>' },
  { l: 1, i: 'axis', t: 'Achsen', e: 'm' },
  { l: 2, i: 'axis', t: 'X-Achse' },
  { l: 2, i: 'axis', t: 'Y-Achse' },
  { l: 2, i: 'axis', t: 'Z-Achse' },
  { l: 1, i: 'plane', t: 'Ebenen', e: 'm' },
  { l: 2, i: 'plane', t: 'XY-Ebene', sel: true },
  { l: 2, i: 'plane', t: 'YZ-Ebene' },
  { l: 2, i: 'plane', t: 'ZX-Ebene' },
  { l: 1, i: 'point', t: 'Punkte', e: 'm' },
  { l: 2, i: 'point', t: 'Ursprung' },
  { l: 1, i: 'marker', t: 'Signierstift Ansichten' },
  { l: 1, i: 'section', t: 'Schnittansichten' },
  { l: 1, i: 'explode', t: 'Explosions-Ansichten' },
  { l: 1, i: 'relate', t: 'Beziehungen' },
  { l: 1, i: 'assy', t: 'T-stück<1>', e: 'p' },
];
const RIGHT = [
  ['newPartAssy', 120], ['dots', 142], ['tiny', 159], ['hex', 175], ['pickBlue', 198], ['sep', 213], ['keyBall', 226], ['redArc', 248], ['sep', 263], ['blueSpark', 277], ['blueRing', 299], ['greenLink', 320], ['ringBall', 342], ['sep', 356], ['fx', 369], ['palette', 391], ['sep', 406], ['brushCube', 420], ['sep', 434], ['gMinus', 448], ['gSpin', 468], ['gPlus', 491], ['gDash', 513], ['sep', 528], ['gCart', 543],
];
const MENU = ['Datei', 'Bearbeiten', 'Ansicht', 'Einfügen', 'Werkzeuge', 'Online Funktionen', 'Bewegungen', 'Fenster', 'Hilfe'];

/* ---------- model drawing (page coordinates) ---------- */
const G = '#14802a';
const Model = () => (
  <ModelSvg viewBox="163 100 1486 900">
    <defs>
      <linearGradient id="tube" gradientUnits="userSpaceOnUse" x1="1116" y1="137" x2="1219" y2="307">
        <stop offset="0" stopColor="#e4e400" />
        <stop offset=".1" stopColor="#fafa00" />
        <stop offset=".24" stopColor="#ffff00" />
        <stop offset=".4" stopColor="#d0d000" />
        <stop offset=".6" stopColor="#808000" />
        <stop offset=".82" stopColor="#181800" />
        <stop offset=".9" stopColor="#000" />
        <stop offset="1" stopColor="#000" />
      </linearGradient>
      <linearGradient id="branch" gradientUnits="userSpaceOnUse" x1="955" y1="808" x2="1122" y2="706">
        <stop offset="0" stopColor="#2a2a00" />
        <stop offset=".04" stopColor="#888800" />
        <stop offset=".12" stopColor="#b4b400" />
        <stop offset=".25" stopColor="#d4d400" />
        <stop offset=".4" stopColor="#e4e400" />
        <stop offset=".72" stopColor="#d8d800" />
        <stop offset=".88" stopColor="#8a8a00" />
        <stop offset=".98" stopColor="#1a1a00" />
        <stop offset="1" stopColor="#000" />
      </linearGradient>
      <linearGradient id="leftCap" gradientUnits="userSpaceOnUse" x1="499" y1="595" x2="552" y2="707">
        <stop offset="0" stopColor="#a0a000" />
        <stop offset="1" stopColor="#5a5a00" />
      </linearGradient>
    </defs>
    <g fill="none" stroke={G} strokeWidth="1.200">
      <path d="M1102 100 447 490" />
      <path d="M1137 100 1426 570 710 999" />
      <path d="M1117 100 1399 561 1371 595 1088 133 1113 100" />
      <path d="M1107 126 1402 607" />
      <path d="M499 693 686 999" />
      <path d="M1184 203 1215 183 1187 215" />
    </g>
    <path d="M1116 137 1219 307 552 703 449 533z" fill="url(#tube)" />
    <ellipse cx="1167" cy="221" rx="100" ry="17" transform="rotate(58.8 1167 221)" fill="url(#tube)" stroke="#ffff10" strokeWidth="2.500" />
    <ellipse cx="1166" cy="218" rx="78" ry="11" transform="rotate(58.8 1166 218)" fill="none" stroke="#ffff10" strokeWidth="2.500" />
    <ellipse cx="498.500" cy="622" rx="99" ry="20" transform="rotate(58.8 498.500 622)" fill="url(#leftCap)" stroke="#eaea00" strokeWidth="2" />
    <ellipse cx="494" cy="618" rx="82" ry="14" transform="rotate(58.8 494 618)" fill="#eeee00" stroke="#a8a800" strokeWidth="1.500" />
    <path d="M1177 208 500 608" stroke="#0f8a70" strokeWidth="1" fill="none" />
    <path d="M510 605 499 612M503 618 499 620" stroke={G} strokeWidth="1" fill="none" />
    <path d="M823 436L968 455L1122 706A98 9 -31.400 0 1 955 808L799 557Q815 500 823 436z" fill="url(#branch)" />
    <ellipse cx="1038.500" cy="757" rx="98" ry="9" transform="rotate(-31.400 1038.500 757)" fill="#b0b000" stroke="#ffff10" strokeWidth="2" />
    <ellipse cx="1038.500" cy="757" rx="84" ry="4.500" transform="rotate(-31.400 1038.500 757)" fill="#d8d800" stroke="#ffff10" strokeWidth="1.500" />
    <path d="M962 800 973 800 972 793zM1112 715 1105 714 1105 720z" fill="#000" />
    <g transform="translate(740 360) scale(.33333)" fill="none" stroke="#ffff00" strokeWidth="5.500">
      <path d="M250 235C235 330 205 470 180 585 155 560 260 400 250 235z" fill="#000" stroke="none" opacity=".75" />
      <path d="M155 240 455 65C490 130 570 195 648 228 662 242 630 244 600 235L320 150C300 290 250 420 205 510 170 575 170 590 178 590 210 540 235 400 250 225" />
      <path d="M100 308 398 128C430 170 510 210 600 255 612 275 590 274 560 270L250 222" />
      <path d="M320 150 685 285C670 300 640 296 610 294L250 228" />
      <path d="M155 240C180 320 190 430 165 510 150 545 145 540 140 510 130 430 135 390 100 308" />
      <path d="M300 155C280 300 220 440 180 560" />
    </g>
    {/* triad */}
    <g transform="translate(160 840) scale(.33333)">
      <path d="M100 58 122 80 145 58M122 80V100" fill="none" stroke="#1a1ae8" strokeWidth="4" />
      <path d="M30 343H78L33 387H78" fill="none" stroke="#f01818" strokeWidth="4" />
      <path d="M220.600 239.400 174 151 181 147 138 108 146 166 153 162 199.400 250.600z" fill="#0a10d8" />
      <path d="M209.500 260.500 118.500 313 114 305 85 345 134 340 129.500 332 220.500 279.500z" fill="#e81010" />
      <path d="M85 345 134 340 129.500 332z" fill="#501010" />
      <path d="M238 210 282 250M282 210 238 250" stroke="#18e818" strokeWidth="4" />
      <circle cx="248" cy="240" r="18" fill="#18e818" />
      <circle cx="236" cy="256" r="11" fill="#0e7a0e" />
    </g>
  </ModelSvg>
);

export default function App() {
  return (
    <Screen>
      <Global />
      <Column>
        <AppWindow>
          <TitleBar>
            <Icon name="assy" size={16} />
            <span>Neue Baugruppe (1) - Alibre Design Expert</span>
            <WinButtons>
              <WinBtn $w={24}><IconSvg width="12" height="8" viewBox="0 0 12 8"><rect y="4" width="12" height="3" fill="#fff" /></IconSvg></WinBtn>
              <WinBtn $w={25}><IconSvg width="12" height="12" viewBox="0 0 12 12"><path d="M1 4h7v7H1zM3 4V1h8v7H8" fill="none" stroke="#fff" strokeWidth="1.500" /></IconSvg></WinBtn>
              <WinBtn $w={42} $close><IconSvg width="12" height="10" viewBox="0 0 12 10"><path d="M1 0l10 10M11 0 1 10" stroke="#fff" strokeWidth="2.500" /></IconSvg></WinBtn>
            </WinButtons>
          </TitleBar>
          <MenuBar>{MENU.map(m => <span key={m}>{m}</span>)}</MenuBar>
          <Toolbar items={ROW1} />
          <Toolbar items={ROW2} />
          <Main>
            <LeftPanel>
              <PanelHeader>Design Explorer</PanelHeader>
              <TreeBox>
                <TreeList>
                  {TREE.map(n => (
                    <TreeRow key={n.t + n.l} $level={n.l}>
                      <Expander $hidden={!n.e} $plus={n.e === 'p'} />
                      <Icon name={n.i} size={16} />
                      <TreeLabel $selected={n.sel} $focus={n.focus}>{n.t}</TreeLabel>
                    </TreeRow>
                  ))}
                </TreeList>
                <HScroll>
                  <ScrollArrow $left />
                  <ScrollThumb>|||</ScrollThumb>
                  <ScrollArrow />
                </HScroll>
              </TreeBox>
            </LeftPanel>
            <Viewport><Model /></Viewport>
            <RightBar>
              <VGrip />
              {RIGHT.map(([n, y], i) => {
                const next = RIGHT[i + 1] ? RIGHT[i + 1][1] : y + 18;
                return (
                  <React.Fragment key={i}>
                    {i === 0 && <VSlot $h={y - 9 - 106} />}
                    <VSlot $h={next - y}>
                      {n === 'sep' ? <VCell><VSep /></VCell> : n === 'fx' ? <VCell>f(×)</VCell> : <VCell><Icon name={n} /></VCell>}
                    </VSlot>
                  </React.Fragment>
                );
              })}
            </RightBar>
          </Main>
          <StatusBar>
            <span>Bereit</span>
            <StatusCell><Icon name="logo" size={16} /></StatusCell>
          </StatusBar>
        </AppWindow>
        <TaskBar>
          <StartOrb />
          <TaskBtn $w={155} $ml={287} />
          <TaskBtn $w={155} $ml={5} />
          <TaskBtn $w={155} $ml={4} />
          <TaskBtn $w={156} $ml={5} />
          <TaskBtn $w={155} $ml={4} $dark />
          <SearchBox />
          <Tray>
            <TrayDot $c="#7040b0" />
            <TrayDot $c="#e0c020" $round />
            <TrayDot $c="#5080b0" $round />
            <TrayDot $c="#e8e020" />
            <TrayDot $c="#5080b0" $round />
            <TrayDot $c="#4a70a0" $round />
            <TrayDot $c="#e0e8f0" />
          </Tray>
        </TaskBar>
      </Column>
      <DesktopStrip />

      <Dialog>
        <DialogTitle>
          <Icon name="logo" size={18} />
          <span>Baugruppen Boolean</span>
        </DialogTitle>
        <DialogClose>
          <IconSvg width="10" height="9" viewBox="0 0 10 9"><path d="M1 0l8 9M9 0 1 9" stroke="#fff" strokeWidth="2" /></IconSvg>
        </DialogClose>
        <DialogClient>
          <Group $mt={0} $pt={6} $pb={3}>
            <legend>Zuschnitt</legend>
            <ListBox $h={64}>
              <ListItem><Icon name="partBlue" size={15} /><span>Neues Teil (3):T-stück</span></ListItem>
              <ListItem><Icon name="partBlue" size={15} /><span>NW-50:T-stück</span></ListItem>
            </ListBox>
            <CheckRow $mt={4} $ml={11}>
              <CheckBox><IconSvg width="9" height="9" viewBox="0 0 9 9"><path d="M1 4.500 3.500 8 8 1" fill="none" stroke="#3a56a8" strokeWidth="1.800" /></IconSvg></CheckBox>
              <span>Werkstücke zusammenfassen</span>
            </CheckRow>
          </Group>
          <Group $mt={7} $pt={7} $pb={3}>
            <legend>Werkzeuge</legend>
            <ListBox $h={63} $ml={1} />
          </Group>
          <CheckRow $mt={7} $ml={8}>
            <CheckBox />
            <span>In die aktuelle Baugruppe einfügen</span>
          </CheckRow>
          <ButtonRow>
            <DlgButton $w={71} $primary>OK</DlgButton>
            <DlgButton $w={73}>Abbrechen</DlgButton>
            <HelpButton $w={21}><HelpDot>?</HelpDot></HelpButton>
          </ButtonRow>
        </DialogClient>
      </Dialog>

      <Callout>
        <div>Für ein neues Teil,<br />welches aus diesen<br />beiden Teilen besteht,<br />den Haken <u>nicht</u> setzen.</div>
      </Callout>

      <ArrowLayer viewBox="0 0 1688 1028">
        <defs>
          <marker id="head" viewBox="0 0 12 10" refX="11" refY="5" markerWidth="12" markerHeight="10" markerUnits="userSpaceOnUse" orient="auto">
            <path d="M0 0 12 5 0 10 2.500 5z" fill="#f00" />
          </marker>
        </defs>
        <g stroke="#f00" strokeWidth="2" fill="none">
          <path d="M958 320 394 202" markerEnd="url(#head)" />
          <path d="M985 650 358 224" markerEnd="url(#head)" />
          <path d="M274 493V402" markerEnd="url(#head)" />
        </g>
      </ArrowLayer>
    </Screen>
  );
}
